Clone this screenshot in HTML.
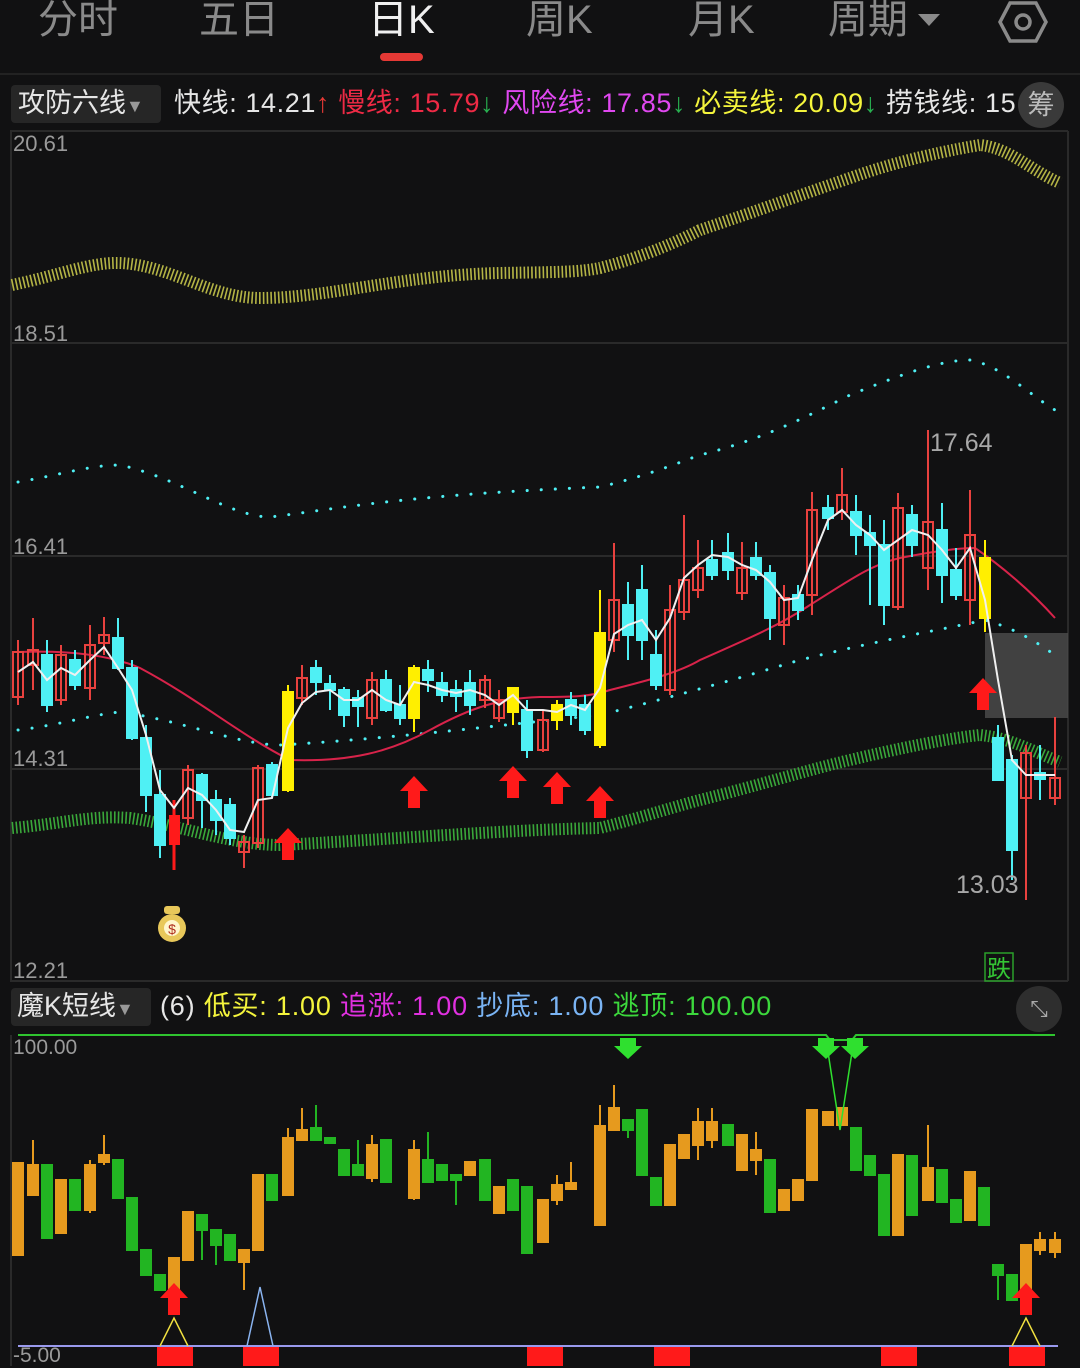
<!DOCTYPE html>
<html><head><meta charset="utf-8"><style>
*{margin:0;padding:0;box-sizing:border-box}
body{width:1080px;height:1368px;background:#111112;overflow:hidden;position:relative;font-family:"Liberation Sans","Noto Sans CJK SC",sans-serif}
.t{position:absolute;top:-4px;font-size:40px;color:#8a8a8a;line-height:48px;white-space:nowrap}
.a{position:absolute;white-space:nowrap}
.lbl{position:absolute;font-size:22px;color:#9a9a9a;left:13px}
</style></head><body>
<div class="t" style="left:38px">分时</div>
<div class="t" style="left:199px">五日</div>
<div class="t" style="left:368px;color:#f0f0f0">日K</div>
<div class="t" style="left:526px">周K</div>
<div class="t" style="left:688px">月K</div>
<div class="t" style="left:828px">周期</div>
<div class="a" style="left:918px;top:14px;width:0;height:0;border-left:11px solid transparent;border-right:11px solid transparent;border-top:12px solid #8a8a8a"></div>
<svg class="a" style="left:996px;top:0" width="54" height="48"><polygon points="14,3 40,3 50,22 40,41 14,41 4,22" fill="none" stroke="#8a8a8a" stroke-width="3.5"/><circle cx="27" cy="22" r="7" fill="none" stroke="#8a8a8a" stroke-width="3.5"/></svg>
<div class="a" style="left:380px;top:53px;width:43px;height:8px;border-radius:4px;background:#e53935"></div>
<div class="a" style="left:0;top:73px;width:1080px;height:2px;background:#222"></div>

<div class="a" style="left:11px;top:85px;width:150px;height:38px;background:#262626;border-radius:4px"></div>
<div class="a" style="top:85px;left:18px;font-size:27px;line-height:36px;color:#e6e6e6">攻防六线<span style="font-size:18px;color:#999">▼</span></div>
<div class="a" style="top:85px;left:174px;width:842px;overflow:hidden;font-size:27px;line-height:36px;color:#e6e6e6;letter-spacing:0.6px">快线: 14.21<span style="color:#e53935">↑</span> <span style="color:#ee2a45">慢线: 15.79</span><span style="color:#28b050">↓</span> <span style="color:#e048f0">风险线: 17.85</span><span style="color:#28b050">↓</span> <span style="color:#f4f43c">必卖线: 20.09</span><span style="color:#28b050">↓</span> 捞钱线: 15.20</div>
<div class="a" style="left:1018px;top:82px;width:46px;height:46px;border-radius:23px;background:#3a3a3a;color:#bbb;font-size:27px;line-height:46px;text-align:center">筹</div>

<svg class="a" style="left:0;top:0" width="1080" height="1368">
<g stroke="#2a2a2a" stroke-width="2" fill="none">
<line x1="10" y1="131" x2="1068" y2="131"/><line x1="10" y1="343" x2="1068" y2="343"/><line x1="10" y1="556" x2="1068" y2="556"/><line x1="10" y1="769" x2="1068" y2="769"/><line x1="10" y1="981" x2="1068" y2="981"/>
<line x1="11" y1="131" x2="11" y2="981"/><line x1="1068" y1="131" x2="1068" y2="981"/>
<line x1="11" y1="1035" x2="11" y2="1366"/>
</g>
<path d="M12,285 C60,275 90,262 120,263 C170,265 210,298 260,298 C330,298 400,275 500,273 C560,272 580,272 600,268 C650,255 680,240 700,230 C760,210 800,195 850,178 C900,160 950,150 980,145 C1010,148 1030,170 1060,183" fill="none" stroke="#b4b445" stroke-width="12" stroke-dasharray="1.6 2.2"/>
<path d="M12,828 C60,824 90,815 130,818 C180,825 230,845 280,845 C380,840 500,830 600,828 C650,815 680,805 700,800 C760,785 800,772 850,760 C900,748 950,738 980,735 C1010,738 1030,750 1060,762" fill="none" stroke="#3aa83a" stroke-width="12" stroke-dasharray="1.6 2.2"/>
<rect x="985" y="633" width="83" height="85" fill="#4a4a4a" opacity="0.85"/>
<path d="M18,482 C60,475 90,465 120,465 C180,478 230,517 270,517 C330,510 400,495 600,487 C650,475 680,462 700,455 C760,440 800,420 850,395 C900,375 940,360 970,360 C1000,365 1030,395 1055,410" fill="none" stroke="#4ff0f4" stroke-width="3" stroke-dasharray="0.1 14" stroke-linecap="round"/>
<path d="M18,730 C60,725 90,715 120,712 C180,720 240,745 280,745 C400,738 500,725 600,715 C680,695 740,678 800,660 C880,640 940,630 985,620 C1020,630 1040,645 1055,655" fill="none" stroke="#4ff0f4" stroke-width="3" stroke-dasharray="0.1 14" stroke-linecap="round"/>
<path d="M18,652 C70,650 110,655 140,668 C200,700 240,735 290,760 C350,762 390,752 430,730 C470,708 500,698 540,697 C570,697 590,697 610,690 C650,680 680,672 700,660 C750,638 780,625 810,605 C850,580 870,565 900,558 C940,550 960,548 975,548 C1000,565 1030,590 1055,618" fill="none" stroke="#d8234a" stroke-width="2"/>
<g stroke-width="2">
<g stroke="#e8413e" fill="none">
<line x1="18" y1="640" x2="18" y2="705"/><rect x="13" y="652" width="10" height="45"/>
<line x1="33" y1="618" x2="33" y2="690"/><rect x="28" y="650" width="10" height="15"/>
<line x1="61" y1="645" x2="61" y2="705"/><rect x="56" y="655" width="10" height="45"/>
<line x1="90" y1="625" x2="90" y2="700"/><rect x="85" y="645" width="10" height="43"/>
<line x1="104" y1="617" x2="104" y2="655"/><rect x="99" y="635" width="10" height="8"/>
<line x1="188" y1="765" x2="188" y2="825"/><rect x="183" y="770" width="10" height="48"/>
<line x1="244" y1="835" x2="244" y2="868"/><rect x="239" y="842" width="10" height="10"/>
<line x1="258" y1="765" x2="258" y2="848"/><rect x="253" y="768" width="10" height="75"/>
<line x1="302" y1="665" x2="302" y2="705"/><rect x="297" y="678" width="10" height="20"/>
<line x1="372" y1="672" x2="372" y2="725"/><rect x="367" y="680" width="10" height="38"/>
<line x1="485" y1="675" x2="485" y2="708"/><rect x="480" y="680" width="10" height="20"/>
<line x1="499" y1="690" x2="499" y2="722"/><rect x="494" y="700" width="10" height="18"/>
<line x1="543" y1="710" x2="543" y2="752"/><rect x="538" y="720" width="10" height="30"/>
<line x1="614" y1="543" x2="614" y2="652"/><rect x="609" y="600" width="10" height="40"/>
<line x1="670" y1="585" x2="670" y2="695"/><rect x="665" y="610" width="10" height="80"/>
<line x1="684" y1="515" x2="684" y2="620"/><rect x="679" y="580" width="10" height="32"/>
<line x1="698" y1="540" x2="698" y2="598"/><rect x="693" y="568" width="10" height="22"/>
<line x1="742" y1="542" x2="742" y2="600"/><rect x="737" y="568" width="10" height="25"/>
<line x1="784" y1="585" x2="784" y2="645"/><rect x="779" y="598" width="10" height="27"/>
<line x1="812" y1="492" x2="812" y2="615"/><rect x="807" y="510" width="10" height="85"/>
<line x1="842" y1="468" x2="842" y2="520"/><rect x="837" y="495" width="10" height="17"/>
<line x1="898" y1="493" x2="898" y2="610"/><rect x="893" y="508" width="10" height="99"/>
<line x1="928" y1="430" x2="928" y2="590"/><rect x="923" y="522" width="10" height="46"/>
<line x1="970" y1="490" x2="970" y2="625"/><rect x="965" y="535" width="10" height="65"/>
<line x1="1026" y1="745" x2="1026" y2="900"/><rect x="1021" y="753" width="10" height="45"/>
<line x1="1055" y1="717" x2="1055" y2="805"/><rect x="1050" y="778" width="10" height="20"/>
</g>
<g stroke="#4ff0f4" fill="#4ff0f4">
<line x1="47" y1="640" x2="47" y2="712"/><rect x="42" y="655" width="10" height="50"/>
<line x1="75" y1="650" x2="75" y2="690"/><rect x="70" y="660" width="10" height="25"/>
<line x1="118" y1="618" x2="118" y2="670"/><rect x="113" y="638" width="10" height="30"/>
<line x1="132" y1="660" x2="132" y2="740"/><rect x="127" y="668" width="10" height="70"/>
<line x1="146" y1="725" x2="146" y2="812"/><rect x="141" y="738" width="10" height="57"/>
<line x1="160" y1="770" x2="160" y2="858"/><rect x="155" y="795" width="10" height="50"/>
<line x1="202" y1="773" x2="202" y2="828"/><rect x="197" y="775" width="10" height="25"/>
<line x1="216" y1="790" x2="216" y2="835"/><rect x="211" y="800" width="10" height="20"/>
<line x1="230" y1="798" x2="230" y2="845"/><rect x="225" y="805" width="10" height="33"/>
<line x1="272" y1="762" x2="272" y2="798"/><rect x="267" y="765" width="10" height="30"/>
<line x1="316" y1="660" x2="316" y2="695"/><rect x="311" y="668" width="10" height="14"/>
<line x1="330" y1="675" x2="330" y2="710"/><rect x="325" y="684" width="10" height="6"/>
<line x1="344" y1="687" x2="344" y2="727"/><rect x="339" y="690" width="10" height="25"/>
<line x1="358" y1="690" x2="358" y2="727"/><rect x="353" y="698" width="10" height="8"/>
<line x1="386" y1="670" x2="386" y2="712"/><rect x="381" y="680" width="10" height="30"/>
<line x1="400" y1="685" x2="400" y2="725"/><rect x="395" y="705" width="10" height="13"/>
<line x1="428" y1="660" x2="428" y2="692"/><rect x="423" y="670" width="10" height="10"/>
<line x1="442" y1="672" x2="442" y2="702"/><rect x="437" y="683" width="10" height="12"/>
<line x1="456" y1="680" x2="456" y2="712"/><rect x="451" y="690" width="10" height="6"/>
<line x1="470" y1="670" x2="470" y2="715"/><rect x="465" y="683" width="10" height="22"/>
<line x1="527" y1="700" x2="527" y2="758"/><rect x="522" y="710" width="10" height="40"/>
<line x1="571" y1="692" x2="571" y2="725"/><rect x="566" y="700" width="10" height="15"/>
<line x1="585" y1="695" x2="585" y2="735"/><rect x="580" y="705" width="10" height="25"/>
<line x1="628" y1="582" x2="628" y2="660"/><rect x="623" y="605" width="10" height="30"/>
<line x1="642" y1="565" x2="642" y2="660"/><rect x="637" y="590" width="10" height="50"/>
<line x1="656" y1="630" x2="656" y2="690"/><rect x="651" y="655" width="10" height="30"/>
<line x1="712" y1="540" x2="712" y2="580"/><rect x="707" y="560" width="10" height="15"/>
<line x1="728" y1="533" x2="728" y2="580"/><rect x="723" y="553" width="10" height="17"/>
<line x1="756" y1="542" x2="756" y2="580"/><rect x="751" y="558" width="10" height="17"/>
<line x1="770" y1="565" x2="770" y2="640"/><rect x="765" y="573" width="10" height="45"/>
<line x1="798" y1="585" x2="798" y2="620"/><rect x="793" y="595" width="10" height="15"/>
<line x1="828" y1="495" x2="828" y2="530"/><rect x="823" y="508" width="10" height="10"/>
<line x1="856" y1="495" x2="856" y2="555"/><rect x="851" y="512" width="10" height="23"/>
<line x1="870" y1="515" x2="870" y2="605"/><rect x="865" y="533" width="10" height="12"/>
<line x1="884" y1="520" x2="884" y2="625"/><rect x="879" y="545" width="10" height="60"/>
<line x1="912" y1="505" x2="912" y2="557"/><rect x="907" y="515" width="10" height="30"/>
<line x1="942" y1="503" x2="942" y2="603"/><rect x="937" y="530" width="10" height="45"/>
<line x1="956" y1="548" x2="956" y2="600"/><rect x="951" y="570" width="10" height="25"/>
<line x1="998" y1="725" x2="998" y2="780"/><rect x="993" y="738" width="10" height="42"/>
<line x1="1012" y1="755" x2="1012" y2="880"/><rect x="1007" y="760" width="10" height="90"/>
<line x1="1040" y1="745" x2="1040" y2="800"/><rect x="1035" y="773" width="10" height="6"/>
</g>
<g stroke="#ffef00" fill="#ffef00">
<line x1="288" y1="685" x2="288" y2="792"/><rect x="283" y="692" width="10" height="98"/>
<line x1="414" y1="665" x2="414" y2="732"/><rect x="409" y="668" width="10" height="50"/>
<line x1="513" y1="688" x2="513" y2="725"/><rect x="508" y="688" width="10" height="24"/>
<line x1="557" y1="700" x2="557" y2="730"/><rect x="552" y="705" width="10" height="15"/>
<line x1="600" y1="590" x2="600" y2="748"/><rect x="595" y="633" width="10" height="112"/>
<line x1="985" y1="540" x2="985" y2="632"/><rect x="980" y="558" width="10" height="60"/>
</g>
<rect x="169" y="815" width="11" height="30" fill="#ff1a1a"/><line x1="174" y1="800" x2="174" y2="870" stroke="#ff1a1a" stroke-width="3"/>
</g>
<polyline points="18,672 33,662 47,680 61,668 75,675 90,660 104,647 118,668 132,690 146,735 160,790 174,808 188,788 202,795 216,810 230,830 244,832 258,800 272,798 288,728 302,703 316,692 330,690 344,700 358,700 372,690 386,700 400,705 414,682 428,685 442,690 456,693 470,690 485,695 499,705 513,695 527,710 543,710 557,712 571,705 585,710 600,688 614,634 628,625 642,620 656,640 670,618 684,578 698,565 712,555 728,557 742,565 756,570 770,582 784,600 798,598 812,560 828,520 842,510 856,525 870,535 884,550 898,540 912,530 928,535 942,550 956,568 970,548 985,600 998,680 1012,760 1026,775 1040,775 1055,775" fill="none" stroke="#f0f0f0" stroke-width="2"/>
<g fill="#ff1a1a">
<path d="M288,828 l14,15 h-8 v17 h-12 v-17 h-8z"/>
<path d="M414,776 l14,15 h-8 v17 h-12 v-17 h-8z"/>
<path d="M513,766 l14,15 h-8 v17 h-12 v-17 h-8z"/>
<path d="M557,772 l14,15 h-8 v17 h-12 v-17 h-8z"/>
<path d="M600,786 l14,15 h-8 v17 h-12 v-17 h-8z"/>
<path d="M983,678 l14,15 h-8 v17 h-12 v-17 h-8z"/>
</g>
<circle cx="172" cy="928" r="14" fill="#e8c85a"/><rect x="164" y="906" width="16" height="8" rx="3" fill="#e8c85a"/><circle cx="172" cy="928" r="8" fill="#fff6cc"/><text x="172" y="934" font-size="14" text-anchor="middle" fill="#b03020" font-family="Liberation Sans">$</text>
<rect x="985" y="953" width="28" height="28" fill="none" stroke="#2aa02a" stroke-width="1.5"/>
<text x="999" y="977" font-size="24" text-anchor="middle" fill="#34c534" font-family="Noto Sans CJK SC">跌</text>
<text x="930" y="451" font-size="25" fill="#a8a8a8" font-family="Liberation Sans">17.64</text>
<text x="956" y="893" font-size="25" fill="#a8a8a8" font-family="Liberation Sans">13.03</text>

<polyline points="18,1035 826,1035 830,1040 852,1040 856,1035 1055,1035" fill="none" stroke="#2fc42f" stroke-width="2"/>
<line x1="18" y1="1346" x2="1058" y2="1346" stroke="#9a9aee" stroke-width="2"/>
<g stroke="#e69a1e" fill="#e69a1e" stroke-width="2">
<rect x="13" y="1163" width="10" height="92"/>
<line x1="33" y1="1140" x2="33" y2="1195"/><rect x="28" y="1165" width="10" height="30"/>
<rect x="56" y="1180" width="10" height="53"/>
<rect x="85" y="1165" width="10" height="45"/><line x1="90" y1="1160" x2="90" y2="1213"/>
<line x1="104" y1="1135" x2="104" y2="1165"/><rect x="99" y="1155" width="10" height="7"/>
<rect x="169" y="1258" width="10" height="32"/>
<rect x="183" y="1212" width="10" height="48"/>
<rect x="239" y="1250" width="10" height="12"/><line x1="244" y1="1262" x2="244" y2="1290"/>
<rect x="253" y="1175" width="10" height="75"/>
<rect x="283" y="1138" width="10" height="57"/><line x1="288" y1="1128" x2="288" y2="1138"/>
<rect x="297" y="1130" width="10" height="10"/><line x1="302" y1="1108" x2="302" y2="1130"/>
<rect x="367" y="1145" width="10" height="33"/><line x1="372" y1="1135" x2="372" y2="1182"/>
<rect x="409" y="1150" width="10" height="48"/><line x1="414" y1="1140" x2="414" y2="1200"/>
<rect x="465" y="1162" width="10" height="13"/>
<rect x="494" y="1187" width="10" height="26"/>
<rect x="538" y="1200" width="10" height="42"/>
<rect x="552" y="1185" width="10" height="15"/><line x1="557" y1="1175" x2="557" y2="1205"/>
<rect x="566" y="1183" width="10" height="6"/><line x1="571" y1="1162" x2="571" y2="1190"/>
<rect x="595" y="1126" width="10" height="99"/><line x1="600" y1="1105" x2="600" y2="1126"/>
<rect x="609" y="1108" width="10" height="22"/><line x1="614" y1="1085" x2="614" y2="1108"/>
<rect x="665" y="1145" width="10" height="60"/>
<rect x="679" y="1135" width="10" height="23"/>
<rect x="693" y="1122" width="10" height="23"/><line x1="698" y1="1108" x2="698" y2="1160"/>
<rect x="707" y="1122" width="10" height="18"/><line x1="712" y1="1108" x2="712" y2="1148"/>
<rect x="737" y="1135" width="10" height="35"/>
<rect x="751" y="1150" width="10" height="10"/><line x1="756" y1="1132" x2="756" y2="1175"/>
<rect x="779" y="1190" width="10" height="20"/>
<rect x="793" y="1180" width="10" height="20"/>
<rect x="807" y="1110" width="10" height="70"/>
<rect x="823" y="1112" width="10" height="13"/>
<rect x="837" y="1108" width="10" height="17"/>
<rect x="893" y="1155" width="10" height="80"/>
<rect x="923" y="1168" width="10" height="32"/><line x1="928" y1="1125" x2="928" y2="1168"/>
<rect x="965" y="1172" width="10" height="48"/>
<rect x="1021" y="1245" width="10" height="55"/>
<rect x="1035" y="1240" width="10" height="10"/><line x1="1040" y1="1232" x2="1040" y2="1255"/>
<rect x="1050" y="1240" width="10" height="12"/><line x1="1055" y1="1232" x2="1055" y2="1258"/>
</g>
<g stroke="#22b522" fill="#22b522" stroke-width="2">
<rect x="42" y="1165" width="10" height="73"/>
<rect x="70" y="1180" width="10" height="30"/>
<rect x="113" y="1160" width="10" height="38"/>
<rect x="127" y="1198" width="10" height="52"/>
<rect x="141" y="1250" width="10" height="25"/>
<rect x="155" y="1275" width="10" height="15"/>
<rect x="197" y="1215" width="10" height="15"/><line x1="202" y1="1230" x2="202" y2="1260"/>
<rect x="211" y="1230" width="10" height="15"/><line x1="216" y1="1245" x2="216" y2="1265"/>
<rect x="225" y="1235" width="10" height="25"/>
<rect x="267" y="1175" width="10" height="25"/>
<rect x="311" y="1128" width="10" height="12"/><line x1="316" y1="1105" x2="316" y2="1128"/>
<rect x="325" y="1138" width="10" height="5"/>
<rect x="339" y="1150" width="10" height="25"/>
<rect x="353" y="1165" width="10" height="10"/><line x1="358" y1="1140" x2="358" y2="1175"/>
<rect x="381" y="1140" width="10" height="42"/>
<rect x="423" y="1160" width="10" height="22"/><line x1="428" y1="1132" x2="428" y2="1160"/>
<rect x="437" y="1165" width="10" height="15"/>
<rect x="451" y="1175" width="10" height="5"/><line x1="456" y1="1180" x2="456" y2="1205"/>
<rect x="480" y="1160" width="10" height="40"/>
<rect x="508" y="1180" width="10" height="30"/>
<rect x="522" y="1187" width="10" height="66"/>
<rect x="623" y="1120" width="10" height="10"/><line x1="628" y1="1130" x2="628" y2="1138"/>
<rect x="637" y="1110" width="10" height="65"/>
<rect x="651" y="1178" width="10" height="27"/>
<rect x="723" y="1125" width="10" height="20"/>
<rect x="765" y="1160" width="10" height="52"/>
<rect x="851" y="1128" width="10" height="42"/>
<rect x="865" y="1156" width="10" height="19"/>
<rect x="879" y="1175" width="10" height="60"/>
<rect x="907" y="1156" width="10" height="59"/>
<rect x="937" y="1170" width="10" height="32"/>
<rect x="951" y="1200" width="10" height="22"/>
<rect x="979" y="1188" width="10" height="37"/>
<rect x="993" y="1265" width="10" height="10"/><line x1="998" y1="1275" x2="998" y2="1300"/>
<rect x="1007" y="1275" width="10" height="25"/>
</g>
<g fill="#2fe02f">
<path d="M620,1038 h16 v8 h6 l-14,13 l-14,-13 h6z"/>
<path d="M818,1038 h16 v8 h6 l-14,13 l-14,-13 h6z"/>
<path d="M847,1038 h16 v8 h6 l-14,13 l-14,-13 h6z"/>
</g>
<polyline points="828,1052 840,1130 852,1052" fill="none" stroke="#2fe02f" stroke-width="1.5"/>
<g fill="#ff1a1a">
<path d="M174,1283 l14,15 h-8 v17 h-12 v-17 h-8z"/>
<path d="M1026,1283 l14,15 h-8 v17 h-12 v-17 h-8z"/>
<rect x="157" y="1347" width="36" height="19"/><rect x="243" y="1347" width="36" height="19"/><rect x="527" y="1347" width="36" height="19"/><rect x="654" y="1347" width="36" height="19"/><rect x="881" y="1347" width="36" height="19"/><rect x="1009" y="1347" width="36" height="19"/>
</g>
<polyline points="160,1346 174,1318 188,1346" fill="none" stroke="#f0e040" stroke-width="1.5"/>
<polyline points="1012,1346 1026,1318 1040,1346" fill="none" stroke="#f0e040" stroke-width="1.5"/>
<polyline points="247,1346 260,1287 273,1346" fill="none" stroke="#8ab4f0" stroke-width="1.5"/>
</svg>

<div class="lbl" style="top:131px">20.61</div>
<div class="lbl" style="top:321px">18.51</div>
<div class="lbl" style="top:534px">16.41</div>
<div class="lbl" style="top:746px">14.31</div>
<div class="lbl" style="top:958px">12.21</div>
<div class="lbl" style="top:1036px;font-size:21px">100.00</div>
<div class="lbl" style="top:1344px;font-size:21px">-5.00</div>

<div class="a" style="left:11px;top:988px;width:140px;height:38px;background:#262626;border-radius:4px"></div>
<div class="a" style="top:988px;left:17px;font-size:27px;line-height:36px;color:#e6e6e6">魔K短线<span style="font-size:18px;color:#999">▼</span></div>
<div class="a" style="top:988px;left:160px;font-size:27px;line-height:36px;color:#e6e6e6;letter-spacing:0.8px">(6) <span style="color:#f4f43c">低买: 1.00</span> <span style="color:#e030e0">追涨: 1.00</span> <span style="color:#7ab4f4">抄底: 1.00</span> <span style="color:#3cd83c">逃顶: 100.00</span></div>
<div class="a" style="left:1016px;top:986px;width:46px;height:46px;border-radius:23px;background:#2e2e2e;color:#aaa;font-size:22px;line-height:46px;text-align:center">⤡</div>
</body></html>
